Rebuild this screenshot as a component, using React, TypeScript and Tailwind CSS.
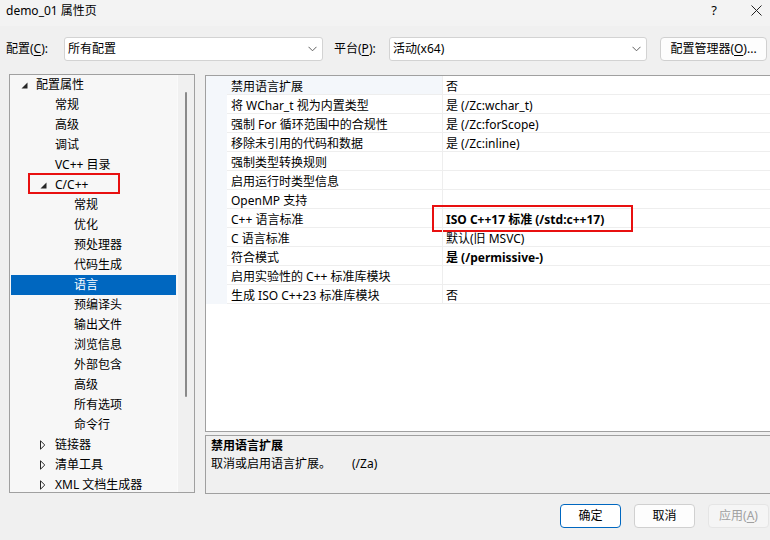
import React from "react";

type TreeRow = { label: string; level: 0 | 1 | 2; arrow?: "open" | "closed"; selected?: boolean; red?: boolean };

const treeRows: TreeRow[] = [
  { label: "配置属性", level: 0, arrow: "open" },
  { label: "常规", level: 1 },
  { label: "高级", level: 1 },
  { label: "调试", level: 1 },
  { label: "VC++ 目录", level: 1 },
  { label: "C/C++", level: 1, arrow: "open", red: true },
  { label: "常规", level: 2 },
  { label: "优化", level: 2 },
  { label: "预处理器", level: 2 },
  { label: "代码生成", level: 2 },
  { label: "语言", level: 2, selected: true },
  { label: "预编译头", level: 2 },
  { label: "输出文件", level: 2 },
  { label: "浏览信息", level: 2 },
  { label: "外部包含", level: 2 },
  { label: "高级", level: 2 },
  { label: "所有选项", level: 2 },
  { label: "命令行", level: 2 },
  { label: "链接器", level: 1, arrow: "closed" },
  { label: "清单工具", level: 1, arrow: "closed" },
  { label: "XML 文档生成器", level: 1, arrow: "closed" },
];

const indentClass: Record<number, string> = {
  0: "pl-[9px]",
  1: "pl-[28px]",
  2: "pl-[47px]",
};

type GridRow = { name: string; value: string; bold?: boolean; red?: boolean; first?: boolean };

const gridRows: GridRow[] = [
  { name: "禁用语言扩展", value: "否", first: true },
  { name: "将 WChar_t 视为内置类型", value: "是 (/Zc:wchar_t)" },
  { name: "强制 For 循环范围中的合规性", value: "是 (/Zc:forScope)" },
  { name: "移除未引用的代码和数据", value: "是 (/Zc:inline)" },
  { name: "强制类型转换规则", value: "" },
  { name: "启用运行时类型信息", value: "" },
  { name: "OpenMP 支持", value: "" },
  { name: "C++ 语言标准", value: "ISO C++17 标准 (/std:c++17)", bold: true, red: true },
  { name: "C 语言标准", value: "默认(旧 MSVC)" },
  { name: "符合模式", value: "是 (/permissive-)", bold: true },
  { name: "启用实验性的 C++ 标准库模块", value: "" },
  { name: "生成 ISO C++23 标准库模块", value: "否" },
];

function Chevron() {
  return (
    <svg width="9" height="6" viewBox="0 0 9 6" className="shrink-0">
      <polyline points="0.5,0.8 4.5,4.8 8.5,0.8" fill="none" stroke="#606060" strokeWidth="1" />
    </svg>
  );
}

function OpenArrow() {
  return (
    <svg width="7" height="7" viewBox="0 0 7 7">
      <path d="M6.5 0.5 L6.5 6.5 L0.5 6.5 Z" fill="#262626" />
    </svg>
  );
}

function ClosedArrow() {
  return (
    <svg width="6" height="10" viewBox="0 0 6 10">
      <path d="M0.5 0.8 L4.8 5 L0.5 9.2 Z" fill="none" stroke="#262626" strokeWidth="1" />
    </svg>
  );
}

export default function App() {
  return (
    <div className="w-[770px] h-[540px] overflow-hidden bg-[#f0f0f0] text-[12px] text-black font-['Noto_Sans','Noto_Sans_CJK_SC',sans-serif] flex flex-col">
      {/* Title bar */}
      <div className="h-[26px] shrink-0 flex items-start bg-[#f3f3f3] relative">
        <div className="pl-[6px] leading-[21px]">demo_01 属性页</div>
        <div className="ml-auto flex items-start">
          <div className="w-[20px] text-center leading-[21px] text-[13px] mr-[27px]">?</div>
          <div className="pt-[5px] pr-[8px]">
            <svg width="11" height="11" viewBox="0 0 11 11">
              <path d="M0.5 0.5 L10.5 10.5 M10.5 0.5 L0.5 10.5" stroke="#222" strokeWidth="1" />
            </svg>
          </div>
        </div>
      </div>

      {/* Toolbar */}
      <div className="mt-[11px] h-[24px] shrink-0 flex items-center">
        <div className="w-[64px] pl-[6px] leading-[24px]">
          配置(<span className="underline underline-offset-2">C</span>):
        </div>
        <div className="w-[259px] h-[24px] bg-white border border-[#d3d3d3] rounded-[3px] flex items-center pl-[3px] pr-[5px]">
          <span className="flex-1">所有配置</span>
          <Chevron />
        </div>
        <div className="w-[66px] pl-[11px] leading-[24px]">
          平台(<span className="underline underline-offset-2">P</span>):
        </div>
        <div className="w-[258px] h-[24px] bg-white border border-[#d3d3d3] rounded-[3px] flex items-center pl-[3px] pr-[5px]">
          <span className="flex-1">活动(x64)</span>
          <Chevron />
        </div>
        <div className="ml-[13px] w-[107px] h-[24px] bg-[#fdfdfd] border border-[#d0d0d0] rounded-[4px] flex items-center justify-center">
          配置管理器(<span className="underline underline-offset-2">O</span>)...
        </div>
      </div>

      {/* Main */}
      <div className="mt-[12px] flex items-start pl-[9px] shrink-0">
        {/* Tree */}
        <div className="mt-[1px] w-[186px] h-[419px] border border-[#a0a0a0] bg-[#f7f7f7] flex shrink-0">
          <div className="flex-1 px-[1px] flex flex-col">
            {treeRows.map((r, i) => (
              <div
                key={i}
                className={
                  "relative h-[20px] flex items-center shrink-0 " +
                  indentClass[r.level] +
                  (r.selected ? " bg-[#0067c0] text-white" : "")
                }
              >
                <div className="w-[16px] h-[20px] flex items-center pl-[1px]">
                  {r.arrow === "open" && <OpenArrow />}
                  {r.arrow === "closed" && <ClosedArrow />}
                </div>
                <span className="leading-[20px] whitespace-nowrap">{r.label}</span>
                {r.red && (
                  <div className="absolute left-[17px] top-[-2px] w-[92px] h-[21px] border-2 border-[#e81010] pointer-events-none" />
                )}
              </div>
            ))}
          </div>
          <div className="w-[17px] h-full bg-[#f0f0f0] border-l border-[#fafafa] flex justify-center">
            <div className="mt-[17px] w-[2px] h-[305px] bg-[#8a8a8a] rounded-[1px]" />
          </div>
        </div>

        {/* Right column */}
        <div className="ml-[10px] mt-[2px] w-[568px] shrink-0 flex flex-col">
          <div className="h-[357px] border border-[#a0a0a0] bg-white flex flex-col">
            {gridRows.map((g, i) => (
              <div key={i} className="flex h-[19px] shrink-0">
                <div className="w-[21px] h-[19px] bg-[#f4f7fb]" />
                <div
                  className={
                    "w-[215px] h-[19px] border-b border-[#eeeeee] pl-[4px] pt-[2px] leading-[18px] whitespace-nowrap " +
                    (g.first ? "bg-[#f4f7fb]" : "bg-white")
                  }
                >
                  {g.name}
                </div>
                <div className="relative flex-1 h-[19px] border-b border-l border-[#eeeeee] pl-[3px] pt-[2px] leading-[18px] whitespace-nowrap">
                  <span className={g.bold ? "font-bold" : ""}>{g.value}</span>
                  {g.red && (
                    <div className="absolute left-[-11px] top-[-4px] w-[201px] h-[27px] border-2 border-[#e81010] pointer-events-none" />
                  )}
                </div>
              </div>
            ))}
          </div>
          <div className="mt-[3px] h-[59px] border border-[#a0a0a0] bg-[#f0f0f0] pl-[5px] pt-[1px]">
            <div className="font-bold leading-[18px]">禁用语言扩展</div>
            <div className="leading-[18px] whitespace-nowrap">
              取消或启用语言扩展。<span className="ml-[21px]">(/Za)</span>
            </div>
          </div>
        </div>
      </div>

      {/* Buttons */}
      <div className="mt-[10px] flex justify-end gap-[13px] pr-[1px]">
        <div className="w-[61px] h-[24px] bg-white border border-[#0067c0] rounded-[4px] flex items-center justify-center">
          确定
        </div>
        <div className="w-[61px] h-[24px] bg-[#fdfdfd] border border-[#d0d0d0] rounded-[4px] flex items-center justify-center">
          取消
        </div>
        <div className="w-[61px] h-[24px] bg-[#f5f5f5] border border-[#e5e5e5] rounded-[4px] flex items-center justify-center text-[#a0a0a0]">
          应用(<span className="underline underline-offset-2">A</span>)
        </div>
      </div>
    </div>
  );
}
